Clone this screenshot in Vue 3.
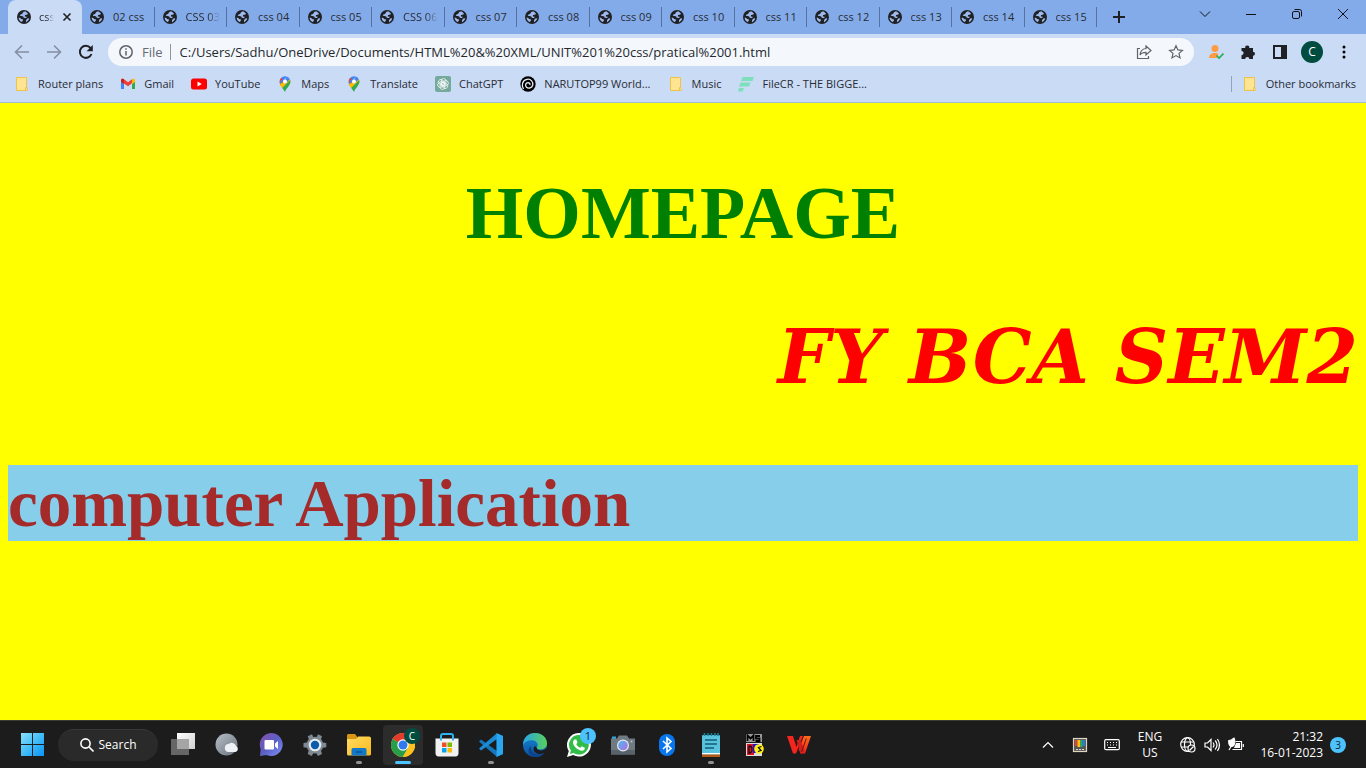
<script setup>
const tabs = ['css 01', '02 css', 'CSS 03', 'css 04', 'css 05', 'CSS 06', 'css 07', 'css 08', 'css 09', 'css 10', 'css 11', 'css 12', 'css 13', 'css 14', 'css 15']
const bookmarks = [
  { label: 'Router plans', icon: 'folder' },
  { label: 'Gmail', icon: 'gmail' },
  { label: 'YouTube', icon: 'youtube' },
  { label: 'Maps', icon: 'pin' },
  { label: 'Translate', icon: 'pin' },
  { label: 'ChatGPT', icon: 'gpt' },
  { label: 'NARUTOP99 World...', icon: 'spiral' },
  { label: 'Music', icon: 'folder' },
  { label: 'FileCR - THE BIGGE...', icon: 'filecr' }
]
const apps = [
  { icon: 'taskview', label: 'Task view' },
  { icon: 'weather', label: 'Weather' },
  { icon: 'chat', label: 'Chat' },
  { icon: 'settings', label: 'Settings' },
  { icon: 'explorer', label: 'File Explorer', open: true },
  { icon: 'chrome', label: 'Chrome', active: true, badge: 'C' },
  { icon: 'store', label: 'Store' },
  { icon: 'vscode', label: 'Code', open: true },
  { icon: 'edge', label: 'Edge' },
  { icon: 'whatsapp', label: 'WhatsApp', badge: '1' },
  { icon: 'camera', label: 'Camera' },
  { icon: 'bluetooth', label: 'Bluetooth' },
  { icon: 'notepad', label: 'Notepad', open: true },
  { icon: 'msdos', label: 'DOSBox' },
  { icon: 'wps', label: 'WPS Office' }
]
</script>

<template>
  <div class="screen">
    <svg class="defs" aria-hidden="true">
      <defs>
        <linearGradient id="gWin" x1="0" y1="0" x2="1" y2="1"><stop offset="0" stop-color="#8be0fb" /><stop offset=".5" stop-color="#42bdf8" /><stop offset="1" stop-color="#0a93f5" /></linearGradient>
        <linearGradient id="gWhite" x1="0" y1="0" x2="1" y2="1"><stop offset="0" stop-color="#fff" /><stop offset="1" stop-color="#cfd0d1" /></linearGradient>
        <linearGradient id="gGrey" x1="0" y1="0" x2="1" y2="1"><stop offset="0" stop-color="#b6bec7" /><stop offset="1" stop-color="#6a737e" /></linearGradient>
        <linearGradient id="gChat" x1="0" y1="0" x2="1" y2="1"><stop offset="0" stop-color="#8a4fa8" /><stop offset=".5" stop-color="#5b5fc7" /><stop offset="1" stop-color="#7f93f4" /></linearGradient>
        <linearGradient id="gFolder" x1="0" y1="0" x2="1" y2="1"><stop offset="0" stop-color="#ffdc62" /><stop offset="1" stop-color="#f9b81c" /></linearGradient>
        <linearGradient id="gEdge" x1="0" y1="0" x2="1" y2="0"><stop offset="0" stop-color="#2aa5e8" /><stop offset="1" stop-color="#58cf58" /></linearGradient>
        <linearGradient id="gEdgeB" x1="0" y1="0" x2="0" y2="1"><stop offset="0" stop-color="#168ad8" /><stop offset="1" stop-color="#0c509f" /></linearGradient>
        <linearGradient id="gLens" x1="0" y1="0" x2="1" y2="1"><stop offset="0" stop-color="#49b8f2" /><stop offset="1" stop-color="#b36de0" /></linearGradient>
        <linearGradient id="gWps" x1="0" y1="0" x2="0" y2="1"><stop offset="0" stop-color="#ff6a1a" /><stop offset="1" stop-color="#f2221c" /></linearGradient>
      </defs>
      <symbol id="globe" viewBox="0 0 14 14"><circle cx="7" cy="7" r="7" fill="#202124" /><path d="M7.200 1.400C5.900 2.100 5.400 3 5.200 4 3.800 4 3 4.800 2.800 5.800l1.700.2c1.500 0 2.200.8 2.200 1.800l1.700.2c.8 0 1.300-.6 1.300-1.300L7.800 6.400 8 5l1.700-.3c.7 0 1.200-.5 1.200-1.100L8.700 1.500zM1.600 7.700c1.500-.1 2.200.6 2.500 1.400l2 .4-.4 1.600-1.200.9C2.800 11 1.700 9.500 1.600 7.700zM11.100 8.300l1.100.2c-.5 1.800-1.700 3-3.200 3.700-.3-1.800.6-3.500 2.100-3.900z" fill="#9dbbef" /></symbol>
      <symbol id="folder" viewBox="0 0 16 16"><path d="M2.500 1.500h10v10.300c1 .5 1.200 1.700.6 2.700H2.500z" fill="#ffe591" stroke="#eec148" /><path d="M11.500 14v-2.500h1.500" fill="none" stroke="#eec148" /></symbol>
      <symbol id="gmail" viewBox="0 0 16 16"><path d="M1 4v9h3V8z" fill="#4285f4" /><path d="M15 4v9h-3V8z" fill="#34a853" /><path d="M1 4.200C1 2.800 2.500 2.300 4 3.300l4 3 4-3v4L8 10.200 1 5.500z" fill="#ea4335" /><path d="M12 3.300c1.500-1 3-.5 3 .9V6l-3 2z" fill="#fbbc04" /><path d="M1 4.300v1.500L4 8V3.300c-1.500-1-3-.4-3 1z" fill="#c5221f" /></symbol>
      <symbol id="youtube" viewBox="0 0 16 16"><rect y="2.500" width="16" height="11" rx="2.500" fill="#f00" /><path d="M6.500 5.500v5L10.800 8z" fill="#fff" /></symbol>
      <symbol id="pin" viewBox="0 0 16 16"><path d="M8 15.700C7.300 12.800 2.600 9.500 2.600 5.600H13.400C13.400 9.500 8.700 12.800 8 15.700z" fill="#34a853" /><path d="M2.600 5.600A5.400 5.400 0 0 1 4 2l4 3.500-4.300 4C3 8.200 2.600 7 2.600 5.600z" fill="#ea4335" /><path d="M4 2a5.400 5.400 0 0 1 5.700-1.400L6.300 5.200 3 9z" fill="#4285f4" /><path d="M3 8l9.900-5.100c1 2 .5 4.500-.6 6l-7.200 3.100C4 10.700 3.100 9.600 3 8z" fill="#fbbc04" /><path d="M5.200 12l8-8c.5 2.200-.3 4.200-2 6.300C9.500 12.400 8.500 13.700 8 15.700z" fill="#34a853" /><path d="M9.700.6a5.300 5.300 0 0 1 3.200 2.600L8 8V4z" fill="#4285f4" /><path d="M2.700 5l1.500-3L6 3.600z" fill="#ea4335" /><circle cx="8" cy="5.500" r="2" fill="#fff" /></symbol>
      <symbol id="gpt" viewBox="0 0 16 16"><rect width="16" height="16" rx="2" fill="#75a99c" /><g fill="none" stroke="#fff" stroke-width=".7"><rect x="6.200" y="2.600" width="4.800" height="6.800" rx="2.300" /><rect x="6.200" y="2.600" width="4.800" height="6.800" rx="2.300" transform="rotate(60 8 8)" /><rect x="6.200" y="2.600" width="4.800" height="6.800" rx="2.300" transform="rotate(120 8 8)" /><rect x="6.200" y="2.600" width="4.800" height="6.800" rx="2.300" transform="rotate(180 8 8)" /><rect x="6.200" y="2.600" width="4.800" height="6.800" rx="2.300" transform="rotate(240 8 8)" /><rect x="6.200" y="2.600" width="4.800" height="6.800" rx="2.300" transform="rotate(300 8 8)" /></g></symbol>
      <symbol id="spiral" viewBox="0 0 16 16"><circle cx="8" cy="8" r="7.700" fill="#000" /><path d="M3.500 13C1 9.500 2.500 4 7 3.300c4-.6 6.500 2.700 5.700 6-.8 2.700-4.200 3.700-6.200 1.900C4.800 9.500 5.700 6.700 8 6.600c1.500 0 2.300 1.200 1.800 2.300" fill="none" stroke="#e8effc" stroke-width="1.300" /></symbol>
      <symbol id="filecr" viewBox="0 0 16 16"><path d="M4.500 1H16l-1.500 4H3zM2.500 6.500h10l-1.500 4H1zM1 12h5l-1.500 3.500H0z" fill="#80dfbb" /></symbol>

      <symbol id="taskview" viewBox="0 0 24 24"><path d="M6 0h18v16H6z" fill="url(#gWhite)" /><path d="M0 6h18v16H0z" fill="#666" /><path d="M6 6h12v10H6z" fill="#a5a5a5" /></symbol>
      <symbol id="weather" viewBox="0 0 24 24"><circle cx="11.500" cy="11.500" r="11" fill="url(#gGrey)" /><path d="M13 19a4 4 0 0 1 .5-7.900A4.500 4.500 0 0 1 21 13a3.200 3.200 0 0 1-.5 6z" fill="#eef2f6" /></symbol>
      <symbol id="chat" viewBox="0 0 24 24"><path d="M12 0a11.500 11.500 0 1 1-4.500 22L1 23l.7-7A11.500 11.500 0 0 1 12 0z" fill="url(#gChat)" /><rect x="5.500" y="7" width="9.500" height="9.500" rx="1" fill="#fff" /><path d="M16 10.500l3-2.500v8l-3-2.500z" fill="#fff" /></symbol>
      <symbol id="settings" viewBox="0 0 24 24"><path d="M9 1.300l1.200 2.600a8 8 0 0 1 3.600 0L15 1.300l4 2-1 3a8 8 0 0 1 1.900 3.200l3.400.4v4.400l-3.400.5a8 8 0 0 1-1.900 3l1 3.100-4 2.100-1.700-2.700a8 8 0 0 1-3 0L8.700 23l-4-2.100 1-3.100a8 8 0 0 1-1.800-3l-3.400-.5V9.900l3.400-.4a8 8 0 0 1 1.900-3.200l-1-3z" fill="#7e8993" /><circle cx="12" cy="12" r="6.300" fill="#e9edf1" /><circle cx="12" cy="12" r="4.200" fill="#0a5cad" /></symbol>
      <symbol id="explorer" viewBox="0 0 24 24"><path d="M0 3c0-1.500.5-2 2-2h6l2 2.500V8H0z" fill="#d89614" /><path d="M0 6h9l2-2.500h11c1.300 0 2 .7 2 2V21c0 1-1 1.500-2 1.500H2C1 22.500 0 22 0 21z" fill="url(#gFolder)" /><path d="M4.500 22.500V17c0-1.500.8-2 2-2h11c1.300 0 2 .7 2 2v5.500z" fill="#1478c8" /><path d="M9 19h6" stroke="#075695" stroke-width="1.500" /></symbol>
      <symbol id="chrome" viewBox="0 0 24 24"><circle cx="12" cy="12" r="12" fill="#fbc116" /><path d="M12 12L1.600 6A12 12 0 0 1 22.400 6z" fill="#e33b2e" /><path d="M1.600 6A12 12 0 0 0 11.800 24L17 15l-5-3z" fill="#269e4b" /><path d="M12 12L22.400 6A12 12 0 0 1 11.800 24L17 15z" fill="#fcc31e" /><circle cx="12" cy="12" r="5.700" fill="#fff" /><circle cx="12" cy="12" r="4.500" fill="#3079ef" /></symbol>
      <symbol id="store" viewBox="0 0 24 24"><path d="M6 7V3c0-1.200.6-2 2-2h8c1.400 0 2 .8 2 2v4" fill="none" stroke="#2eb4ee" stroke-width="2" /><path d="M.5 5.500h23V20c0 2.200-1 3.500-3 3.500h-17c-2 0-3-1.300-3-3.500z" fill="#f1f1f1" /><path d="M6 5V7.500M18 5v2.500" stroke="#2eb4ee" stroke-width="2" /><path d="M7 9.500h4.500V14H7z" fill="#f25022" /><path d="M12.500 9.500H17V14h-4.500z" fill="#7fba00" /><path d="M7 15h4.500v4.500H7z" fill="#00a4ef" /><path d="M12.500 15H17v4.500h-4.500z" fill="#ffb900" /></symbol>
      <symbol id="vscode" viewBox="0 0 24 24"><path d="M17.500.5L24 3v18l-6.500 2.500L0 8.500 2 6.500 18 18z" fill="#1277bd" /><path d="M17.500.5L0 15.500l2 2L18 6z" fill="#1c8bd5" /><path d="M17.500 0L24 3v18l-6.500 3z" fill="#2ba7f2" /></symbol>
      <symbol id="edge" viewBox="0 0 24 24"><circle cx="12" cy="12" r="12" fill="url(#gEdgeB)" /><path d="M0 11C.5 4.500 5.500 0 12 0c7 0 12 4.800 12 10.300 0 4-3 6.200-6.500 6.200-2.600 0-4-1-3.800-2 1.500-1.400 1.300-4.200-.7-5.700C9.500 6.200 2.500 7 0 12z" fill="url(#gEdge)" /><path d="M8 13c-.8 5 3 9 9.500 8.500 1.700-.2 3.500-.9 4.700-1.900A12 12 0 0 1 10 23.800C5 22 4 16 8 13z" fill="#0c438b" /><path d="M13.700 14.500c-.2 1.800 2 3 4.500 3 2.300 0 4.300-1 5.800-3.500l-1.600 5.500c-3 1.800-7 2-10-.1-2.700-2-2.300-4.300-.4-6.400z" fill="#1c1c1c" /></symbol>
      <symbol id="whatsapp" viewBox="0 0 24 24"><path d="M12 0a11.800 11.800 0 1 1-5.800 22L0 24l1.800-6A11.800 11.800 0 0 1 12 0z" fill="#fff" /><path d="M12 2a9.800 9.800 0 1 1-5.400 18l-3.700 1 1-3.500A9.800 9.800 0 0 1 12 2z" fill="#32bd48" /><path d="M7.500 6.500h1.800l1.200 3-1.200 1.700c1 1.700 2.300 2.800 4 3.500l1.500-1.500 3 1.500c.3 2-1.700 3.300-3.300 3-4.500-.9-8-4.700-8.500-8 0-1.300.6-2.700 1.500-3.200z" fill="#fff" /></symbol>
      <symbol id="camera" viewBox="0 0 24 24"><path d="M1 6V3.500h4V6" fill="#2ba6de" /><path d="M0 5.500h6l2-3h8l2 3h6v16H0z" fill="#707a83" /><path d="M0 17h24v4.500H0z" fill="#59636c" /><circle cx="12" cy="12.500" r="6" fill="#e6eaf0" /><circle cx="12" cy="12.500" r="4.800" fill="url(#gLens)" /><circle cx="20.500" cy="8.500" r="1" fill="#bac4cc" /></symbol>
      <symbol id="bluetooth" viewBox="0 0 24 24"><rect x="4" y="1" width="16" height="22" rx="8" fill="#0877ee" /><path d="M8 8l8 7.500L12 19V5l4 3.500L8 16" fill="none" stroke="#fff" stroke-width="1.600" /></symbol>
      <symbol id="notepad" viewBox="0 0 24 24"><rect x="3" y="2" width="18" height="20" rx="1" fill="#59c3de" /><path d="M3 20h18v1.500H3z" fill="#fff" /><path d="M3 21.500h18V24H3z" fill="#b45a16" /><path d="M5.500 0v3M9 0v3M12.500 0v3M16 0v3M19 0v3" stroke="#16819b" stroke-width="1.500" /><path d="M6 7h12M6 11h12M6 15h9" stroke="#125e76" stroke-width="1.500" /></symbol>
      <symbol id="msdos" viewBox="0 0 24 24"><path d="M3 1h16v8H3z" fill="#999" /><path d="M4.500 8V2.500l3 3 3-3V8M17 3h-4v2.500h3.500V8H12.500" fill="none" stroke="#000" stroke-width="1.800" /><path d="M3 10h16v13H3z" fill="#ddd" /><path d="M4 11h7v11H4z" fill="#e80d20" /><path d="M10 11h6v9h-6z" fill="#1717db" /><circle cx="16" cy="16" r="4.800" fill="#ffee16" /><path d="M6 13v7c4 0 4-7 0-7M18.500 13.500l-3 1 2.500 3-3 1" fill="none" stroke="#111" stroke-width="1.300" /></symbol>
      <symbol id="wps" viewBox="0 0 24 24"><path d="M0 3h6l3.500 11L13 3h3L9 20.500H6z" fill="#f3261d" /><path d="M10 20.500L17 3h7l-6 17.500h-4.500l-1.800-4.500z" fill="url(#gWps)" /><path d="M9.500 7h4l4.200 11-2 2.500h-2z" fill="#d91d18" /><path d="M19.300 5.500L14.500 19" stroke="#601c15" stroke-width="1" /></symbol>
    </svg>

    <header class="browser">
      <div class="tabstrip">
        <nav class="tabs" aria-label="Tabs">
          <button v-for="(tab, i) in tabs" :key="tab" class="tab" :class="{ current: i === 0, faded: tab.startsWith('CSS') }">
            <svg class="favicon"><use href="#globe" /></svg>
            <span class="tabtext">{{ tab }}</span>
            <svg v-if="i === 0" class="close" viewBox="0 0 10 10"><path d="M1.500 1.500l7 7M8.500 1.500l-7 7" /></svg>
          </button>
        </nav>
        <button class="newtab" aria-label="New tab"><svg viewBox="0 0 12 12"><path d="M6 0v12M0 6h12" /></svg></button>
        <div class="window-controls">
          <button aria-label="Search tabs"><svg viewBox="0 0 12 12"><path d="M1 3.500l5 5 5-5" /></svg></button>
          <button aria-label="Minimize"><svg viewBox="0 0 12 12"><path d="M1 6.500h10" /></svg></button>
          <button aria-label="Restore"><svg viewBox="0 0 12 12"><rect x="1.500" y="3.500" width="7" height="7" rx="1.500" /><path d="M3.500 1.500H8.500a2 2 0 0 1 2 2V8.500" /></svg></button>
          <button aria-label="Close"><svg viewBox="0 0 12 12"><path d="M1 1l10 10M11 1L1 11" /></svg></button>
        </div>
      </div>

      <div class="toolbar">
        <div class="history">
          <button aria-label="Back"><svg class="dim" viewBox="0 0 16 16"><path d="M15 8H2M8 1.500L1.500 8 8 14.500" /></svg></button>
          <button aria-label="Forward"><svg class="dim" viewBox="0 0 16 16"><path d="M1 8h13M8 1.500L14.500 8 8 14.500" /></svg></button>
          <button aria-label="Reload"><svg viewBox="0 0 16 16"><path d="M13.500 10A6 6 0 1 1 12.500 4l1 1.200" /><path class="solid" d="M14.800 1v6.200H8.600z" /></svg></button>
        </div>
        <div class="omnibox">
          <svg class="info" viewBox="0 0 14 14"><circle cx="7" cy="7" r="6.200" /><path d="M7 6v4.500M7 3.200v1.600" /></svg>
          <label for="address">File</label>
          <input id="address" type="text" value="C:/Users/Sadhu/OneDrive/Documents/HTML%20&amp;%20XML/UNIT%201%20css/pratical%2001.html" />
          <button aria-label="Share"><svg viewBox="0 0 16 16"><path d="M4 4.500H1.500v10h11V12" /><path d="M10 2l5 4.500L10 11V8.300C7 8.300 5.200 9 4 11c.2-3.500 2-6 6-6.500z" /></svg></button>
          <button aria-label="Bookmark this page"><svg viewBox="0 0 16 16"><path d="M8 1.800l1.900 4.100 4.500.5-3.400 3 1 4.500L8 11.600l-4 2.300 1-4.500-3.400-3 4.500-.5z" /></svg></button>
        </div>
        <div class="extensions">
          <button aria-label="Extension"><svg viewBox="0 0 16 16"><circle cx="7" cy="4.500" r="3.500" fill="#ff9c43" /><path d="M1 14c0-3.500 2.500-5 6-5 1.500 0 2.700.3 3.500 1L9 14z" fill="#ff9c43" /><path d="M8.500 11.500l2.500 2.500 4.500-4.500" fill="none" stroke="#22ac5b" stroke-width="1.600" /></svg></button>
          <button aria-label="Extensions"><svg viewBox="0 0 16 16"><path d="M1.500 4h3.800a2 2 0 1 1 3.900 0H13v3.700a2 2 0 1 1 0 4V15H9.400a2.100 2.100 0 0 0-4.200 0H1.500v-3.800a2.100 2.100 0 0 0 0-4.200z" fill="#202124" /></svg></button>
          <button aria-label="Side panel"><svg viewBox="0 0 16 16"><path d="M1 1h14v14H1zm2 2v10h6V3z" fill="#202124" fill-rule="evenodd" /></svg></button>
          <button class="avatar" aria-label="Profile">C</button>
          <button aria-label="Menu"><svg viewBox="0 0 16 16"><circle cx="8" cy="3" r="1.500" /><circle cx="8" cy="8" r="1.500" /><circle cx="8" cy="13" r="1.500" /></svg></button>
        </div>
      </div>

      <nav class="bookmarks" aria-label="Bookmarks">
        <a v-for="b in bookmarks" :key="b.label" href="#"><svg><use :href="'#' + b.icon" /></svg>{{ b.label }}</a>
        <a class="other" href="#"><svg><use href="#folder" /></svg>Other bookmarks</a>
      </nav>
    </header>

    <main class="page">
      <h1 class="home">HOMEPAGE</h1>
      <h1 class="course">FY BCA SEM2</h1>
      <h1 class="subject">computer Application</h1>
    </main>

    <footer class="taskbar">
      <button class="app start" aria-label="Start"><svg viewBox="0 0 24 24"><path d="M0 0h11.500v11.500H0zM12.500 0H24v11.500H12.500zM0 12.500h11.500V24H0zM12.500 12.500H24V24H12.500z" fill="url(#gWin)" /></svg></button>
      <button class="search"><svg viewBox="0 0 14 14"><circle cx="5.500" cy="5.500" r="4.600" /><path d="M9 9l4.500 4.500" /></svg>Search</button>
      <div class="apps">
        <button v-for="a in apps" :key="a.icon" class="app" :class="{ active: a.active, open: a.open }" :aria-label="a.label">
          <svg><use :href="'#' + a.icon" /></svg>
          <span v-if="a.badge" class="badge" :class="{ profile: a.active }">{{ a.badge }}</span>
        </button>
      </div>
      <div class="tray">
        <button aria-label="Hidden icons"><svg viewBox="0 0 16 16"><path d="M3 10.500l5-5 5 5" /></svg></button>
        <button aria-label="Colour tool"><svg viewBox="0 0 16 16"><rect x="1.500" y="1.500" width="13" height="13" fill="#555" stroke="#e0d5bf" /><path d="M3 3h2.500v6H3z" fill="#e5402c" stroke="none" /><path d="M5.500 3H8v7H5.500z" fill="#ffbd15" stroke="none" /><path d="M8 3h2.500v7H8z" fill="#30aa59" stroke="none" /><path d="M10.500 3H13v6h-2.500z" fill="#2280d8" stroke="none" /><path d="M4 12.500h2M7 12.500h2M10 12.500h2" stroke="#ddd" /></svg></button>
        <button aria-label="Touch keyboard"><svg viewBox="0 0 16 16"><rect x=".7" y="2.700" width="14.600" height="10" rx="1.200" /><path d="M3 5.500h1M6 5.500h1M9 5.500h1M12 5.500h1M3 8h1M6 8h1M9 8h1M12 8h1M4 10.500h8" /></svg></button>
        <button class="lang">ENG<br />US</button>
        <button class="status" aria-label="Network, volume, battery">
          <svg viewBox="0 0 16 16"><circle cx="7.500" cy="7.500" r="6.800" /><ellipse cx="7.500" cy="7.500" rx="3" ry="6.800" /><path d="M1.300 5h12.400M1.300 10h7" /><circle cx="11.500" cy="11.500" r="3.500" fill="#1c1c1c" /><path d="M9.500 13.500l4-4" /></svg>
          <svg viewBox="0 0 16 16"><path d="M1 6h2.500L7 2.500v11L3.500 10H1zM9 5.500c1.200 1.500 1.200 3.500 0 5M11.200 3.500c2.200 2.700 2.200 6.300 0 9M13.400 2c2.700 3.500 2.700 8.500 0 12" /></svg>
          <svg viewBox="0 0 16 16"><path d="M7.500 4.500h6v8H4.500M15.300 7v3" /><path d="M.8 3.500C4.500 3.500 5.500 1 6 1c1.500 3.500 1 8-2.500 8.500C1.500 9.500.5 7 .8 3.500zM1 13l3-5" fill="#fff" /><path d="M6 11h6V6H8z" fill="#fff" stroke="none" /></svg>
        </button>
        <button class="clock">21:32<br />16-01-2023</button>
        <span class="count">3</span>
      </div>
    </footer>
  </div>
</template>

<style>
body { margin: 0; }
</style>

<style scoped>
.screen { display: flex; flex-direction: column; min-height: 100vh; font: 12px/16px "Open Sans", "Noto Sans", sans-serif; color: #282b32; }
.defs { position: absolute; width: 0; height: 0; }
button { display: flex; align-items: center; justify-content: center; border: 0; padding: 0; margin: 0; background: none; color: inherit; font: inherit; }
svg { flex: none; }
.browser { background: #cadbf6; border-bottom: 1px solid #a5b8d5; }
.tabstrip { display: flex; height: 34px; background: #84abe9; padding-left: 8px; font-size: 11px; }
.tabs { display: flex; flex: 0 1 1089px; min-width: 0; }
.tab { position: relative; flex: 1 1 0; min-width: 0; justify-content: flex-start; gap: 9px; padding: 0 7px 0 8px; }
.tab::after { content: ""; position: absolute; right: 0; top: 7px; width: 1px; height: 20px; background: #56719f; }
.tab.current { flex: 0 0 74px; gap: 8px; padding-left: 9px; padding-right: 10px; background: #cadbf6; border-radius: 8px 8px 0 0; }
.tab.current::after { display: none; }
.favicon { width: 14px; height: 14px; }
.tabtext { flex: 1; min-width: 0; overflow: hidden; white-space: nowrap; text-align: left; }
.faded .tabtext { -webkit-mask-image: linear-gradient(to right, #000 65%, transparent); mask-image: linear-gradient(to right, #000 65%, transparent); }
.current .tabtext { -webkit-mask-image: linear-gradient(to right, #000 50%, transparent); mask-image: linear-gradient(to right, #000 50%, transparent); }
.close { width: 10px; height: 10px; fill: none; stroke: #202124; stroke-width: 1.6; }
.newtab { width: 44px; }
.newtab svg { width: 12px; height: 12px; stroke: #202124; stroke-width: 2; }
.window-controls { display: flex; margin-left: auto; height: 28px; }
.window-controls button { width: 46px; }
.window-controls svg { width: 12px; height: 12px; fill: none; stroke: #111; stroke-width: 1; }
.toolbar { display: flex; align-items: center; height: 36px; padding-right: 6px; }
.history { display: flex; padding-left: 6px; width: 102px; }
.history button { width: 32px; }
.history svg { width: 16px; height: 16px; fill: none; stroke: #202124; stroke-width: 2; }
.history .dim { stroke: #858fa4; stroke-width: 1.6; }
.history .solid { fill: #202124; stroke: none; }
.omnibox { display: flex; align-items: center; flex: 1; height: 28px; padding: 0 10px 0 11px; border-radius: 14px; background: #f4f8fd; font-size: 13px; }
.omnibox svg { width: 16px; height: 16px; fill: none; stroke: #5f6368; stroke-width: 1.2; }
.omnibox .info { width: 14px; height: 14px; stroke-width: 1.5; }
.omnibox label { margin-left: 9px; padding-right: 7px; border-right: 1px solid #8f959f; color: #656a72; }
.omnibox input { flex: 1; min-width: 0; border: 0; padding: 0 0 0 9px; outline: 0; background: none; color: #25282e; font: inherit; height: 24px; }
.omnibox button { width: 16px; margin-left: 16px; }
.extensions { display: flex; align-items: center; padding-left: 6px; }
.extensions button { width: 32px; height: 24px; }
.extensions svg { width: 16px; height: 16px; }
.extensions .avatar { width: 22px; height: 22px; margin: 0 5px; border-radius: 50%; background: #004d40; color: #fff; }
.bookmarks { display: flex; align-items: center; height: 28px; padding: 0 10px 4px 14px; gap: 17px; font-size: 11px; }
.bookmarks a { display: flex; align-items: center; gap: 8px; color: inherit; text-decoration: none; white-space: nowrap; }
.bookmarks svg { width: 16px; height: 16px; }
.bookmarks .other { margin-left: auto; padding-left: 10px; border-left: 1px solid #91a3c1; }
.page { flex: 1; padding: 72px 8px 8px; background: #ff0; }
.page h1 { margin: 0; font-weight: bold; }
.home { text-align: center; color: green; font: 74px/76px "Old English Text MT", "Liberation Serif", serif; }
.course { text-align: right; color: red; font: italic 74px/76px "Harlow Solid Italic", "DejaVu Serif", serif; }
.page .course { margin-top: 68px; white-space: nowrap; }
.subject { color: brown; background: skyblue; font: 67px/76px "Liberation Serif", serif; }
.page .subject { margin-top: 70px; }
.taskbar { display: flex; align-items: center; height: 47px; border-top: 1px solid #3b3b35; background: #1c1c1c; color: #fff; padding: 0 20px 0 10px; }
.app { position: relative; width: 44px; height: 40px; }
.app svg { width: 24px; height: 24px; }
.start svg { width: 23px; height: 23px; }
.search { width: 100px; height: 32px; margin: 0 3px 0 4px; gap: 5px; border-radius: 16px; background: #2a2a2a; border-top: 1px solid #383838; }
.search svg { width: 14px; height: 14px; fill: none; stroke: #fff; stroke-width: 1.6; }
.apps { display: flex; }
.app.active::before { content: ""; position: absolute; z-index: 0; inset: 0 2px; border-radius: 4px; background: #2c2c2c; }
.app.active svg { position: relative; }
.app.active::after, .app.open::after { content: ""; position: absolute; bottom: 1px; left: 19px; width: 6px; height: 3px; border-radius: 2px; background: #929292; }
.app.active::after { left: 14px; width: 16px; background: #4cc2ff; }
.badge { position: absolute; top: 3px; right: 5px; width: 16px; height: 16px; border-radius: 50%; background: #4cc2ff; color: #123; font-size: 11px; }
.badge.profile { background: #004d40; color: #fff; font-size: 10px; }
.tray { display: flex; align-items: center; margin-left: auto; }
.tray button { width: 32px; height: 40px; }
.tray svg { width: 16px; height: 16px; fill: none; stroke: #fff; stroke-width: 1.2; }
.tray .lang { width: 44px; text-align: center; }
.tray .status { width: 76px; padding-left: 4px; gap: 8px; }
.tray .clock { width: 75px; justify-content: flex-end; text-align: right; }
.count { width: 16px; height: 16px; margin-left: 7px; border-radius: 50%; background: #4cc2ff; color: #123; font-size: 10px; text-align: center; }
</style>
